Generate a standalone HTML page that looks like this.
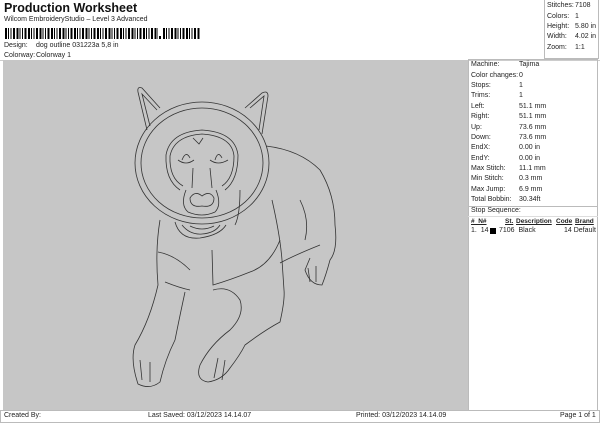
<!DOCTYPE html>
<html><head><meta charset="utf-8"><style>
body{margin:0;width:600px;height:424px;background:#fff;font-family:"Liberation Sans",sans-serif;position:relative;overflow:hidden;color:#222}
.a{position:absolute;white-space:nowrap;font-size:7px}
.box{position:absolute;border:1px solid #bbb;box-sizing:border-box}
table{border-collapse:collapse;font-size:7px}
td{padding:0;height:10.4px;line-height:10px}
.bc{position:absolute;top:28px;height:11px;background:repeating-linear-gradient(90deg,#000 0 2px,#fff 2px 3px,#000 3px 4px,#fff 4px 5.5px,#000 5.5px 6.5px,#fff 6.5px 8px,#000 8px 10px,#fff 10px 11.5px)}
</style></head><body>
<div class="a" style="left:4px;top:1px;font-size:12.5px;font-weight:bold;color:#111">Production Worksheet</div>
<div class="a" style="left:4px;top:16px">Wilcom EmbroideryStudio – Level 3 Advanced</div>
<div class="bc" style="left:5px;width:153px"></div>
<div style="position:absolute;left:159px;top:36px;width:1.5px;height:3px;background:#000"></div>
<div class="bc" style="left:163px;width:37px"></div>
<div class="a" style="left:4px;top:42px">Design:</div><div class="a" style="left:36px;top:42px">dog outline 031223a 5,8 in</div>
<div class="a" style="left:4px;top:52px">Colorway:</div><div class="a" style="left:36px;top:52px">Colorway 1</div>
<div style="position:absolute;left:0;top:60px;width:600px;border-top:1px solid #ccc"></div>
<div class="box" style="left:544px;top:0;width:55px;height:59px;border-top:none"></div>
<table style="position:absolute;left:547px;top:1px"><tr><td style="width:28px">Stitches:</td><td>7108</td></tr><tr><td>Colors:</td><td>1</td></tr><tr><td>Height:</td><td>5.80 in</td></tr><tr><td>Width:</td><td>4.02 in</td></tr><tr><td>Zoom:</td><td>1:1</td></tr></table>
<div style="position:absolute;left:3px;top:60px;width:465px;height:350px;background:#c6c6c6"></div>
<div class="box" style="left:468px;top:59px;width:130px;height:352px"></div>
<table style="position:absolute;left:471px;top:60px"><tr><td style="width:48px">Machine:</td><td>Tajima</td></tr>
<tr><td>Color changes:</td><td>0</td></tr><tr><td>Stops:</td><td>1</td></tr><tr><td>Trims:</td><td>1</td></tr>
<tr><td>Left:</td><td>51.1 mm</td></tr><tr><td>Right:</td><td>51.1 mm</td></tr><tr><td>Up:</td><td>73.6 mm</td></tr>
<tr><td>Down:</td><td>73.6 mm</td></tr><tr><td>EndX:</td><td>0.00 in</td></tr><tr><td>EndY:</td><td>0.00 in</td></tr>
<tr><td>Max Stitch:</td><td>11.1 mm</td></tr><tr><td>Min Stitch:</td><td>0.3 mm</td></tr><tr><td>Max Jump:</td><td>6.9 mm</td></tr>
<tr><td>Total Bobbin:</td><td>30.34ft</td></tr></table>
<div style="position:absolute;left:468px;top:206px;width:130px;border-top:1px solid #bbb"></div>
<div class="a" style="left:471px;top:207px">Stop Sequence:</div>
<div style="position:absolute;left:468px;top:216px;width:130px;border-top:1px solid #ddd"></div>
<div class="a" style="left:471px;top:218px;font-size:6.5px;font-weight:bold;text-decoration:underline">#&nbsp;&nbsp;N#</div>
<div class="a" style="left:505px;top:218px;font-size:6.5px;font-weight:bold;text-decoration:underline">St.</div>
<div class="a" style="left:516px;top:218px;font-size:6.5px;font-weight:bold;text-decoration:underline">Description</div>
<div class="a" style="left:556px;top:218px;font-size:6.5px;font-weight:bold;text-decoration:underline">Code</div>
<div class="a" style="left:575px;top:218px;font-size:6.5px;font-weight:bold;text-decoration:underline">Brand</div>
<div class="a" style="left:471px;top:227px">1.&nbsp;&nbsp;14</div>
<div style="position:absolute;left:490px;top:228px;width:6px;height:6px;background:#000"></div>
<div class="a" style="left:499px;top:227px">7106&nbsp; Black</div>
<div class="a" style="left:564px;top:227px">14 Default</div>
<div class="box" style="left:0;top:410px;width:600px;height:13px"></div>
<div class="a" style="left:4px;top:412px">Created By:</div>
<div class="a" style="left:148px;top:412px">Last Saved: 03/12/2023 14.14.07</div>
<div class="a" style="left:356px;top:412px">Printed: 03/12/2023 14.14.09</div>
<div class="a" style="left:560px;top:412px">Page 1 of 1</div>
<svg style="position:absolute;left:0;top:0" width="600" height="424" fill="none" stroke="#333" stroke-width="0.8">
<path d="M147 130 L138 92 Q137 86 142 88 L160 108"/><path d="M150 126 L142 94 L157 110"/>
<path d="M245 108 L262 93 Q268 90 268 96 L262 134"/><path d="M250 108 L264 96 L259 130"/>
<ellipse cx="202" cy="163" rx="67" ry="61"/><ellipse cx="202" cy="163" rx="61" ry="55"/>
<path d="M180 190 Q165 180 166 155 Q170 132 202 130 Q235 132 238 155 Q238 180 225 190"/>
<path d="M183 186 Q169 178 170 156 Q174 136 202 134 Q232 136 234 156 Q234 178 222 186"/>
<path d="M193 138 L199 144 L203 138"/>
<path d="M186 190 Q180 205 188 212 Q202 218 215 212 Q222 205 216 190"/>
<path d="M190 198 Q195 190 202 196 Q210 190 214 198 Q214 208 202 206 Q190 208 190 198Z"/>
<path d="M182 160 Q186 150 190 158 M178 160 Q186 166 194 160"/><path d="M215 160 Q218 150 222 158 M210 160 Q218 166 228 160"/>
<path d="M193 168 L192 188 M210 168 L212 188"/>
<path d="M266 146 Q300 150 320 170 Q335 195 335 225 Q338 250 330 260 Q326 275 322 285 Q310 285 305 270 L310 258"/>
<path d="M175 222 Q180 240 200 238 Q220 235 226 225"/><path d="M182 225 Q190 235 202 234 Q215 233 220 225"/><path d="M190 226 Q202 232 214 226"/>
<path d="M160 220 Q155 250 158 285 Q150 320 135 345 Q130 360 138 384 Q150 390 160 382 Q165 360 175 340 Q180 315 185 292"/>
<path d="M158 252 Q175 255 190 270 M165 282 Q180 288 190 290"/>
<path d="M212 250 L213 285 Q230 280 250 272 Q270 265 280 240 M235 225 Q240 215 240 190"/>
<path d="M213 290 Q230 285 240 300 Q245 315 230 330 Q210 345 200 365 Q195 380 208 382 Q222 380 230 368 Q240 355 245 345 Q265 330 280 322 Q285 300 284 290 L282 260"/>
<path d="M280 263 Q295 255 320 245"/>
<path d="M272 200 Q280 235 282 260 M300 200 Q310 220 305 240"/>
<path d="M140 360 L142 380 M150 362 L150 382 M218 358 L214 378 M225 360 L222 380 M308 268 L310 282 M316 266 L316 282"/>
</svg>
</body></html>
